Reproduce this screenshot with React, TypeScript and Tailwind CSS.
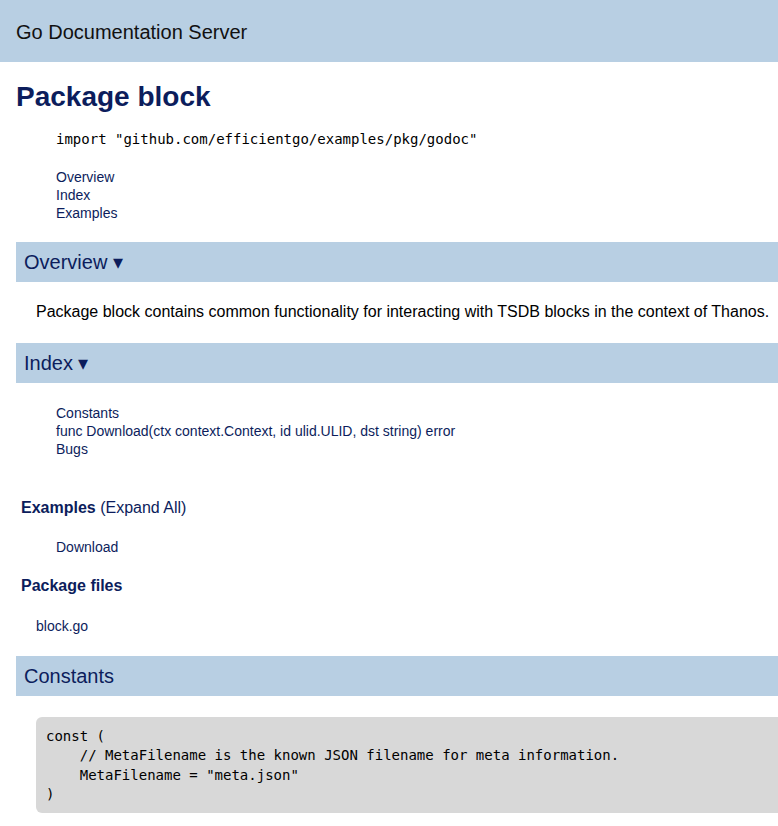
export default function App() {
  const sans = { fontFamily: '"Liberation Sans", Arial, sans-serif' };
  const mono = { fontFamily: '"DejaVu Sans Mono", monospace' };
  return (
    <div className="min-h-screen bg-white overflow-hidden" style={sans}>
      <header className="h-[62px] bg-[#b8cfe3] px-4 pt-[2px] flex items-center">
        <span className="text-[20px] text-[#111]">Go Documentation Server</span>
      </header>

      <main className="pl-4 text-[#0c1d5c]">
        <h1 className="mt-[19px] text-[28px] leading-[32px] font-bold">Package block</h1>
        <div className="mt-[17px] pl-10 text-[14px] leading-[18px] text-black" style={mono}>
          import "github.com/efficientgo/examples/pkg/godoc"
        </div>
        <div className="mt-5 pl-10 text-[14px] leading-[18px] flex flex-col">
          <a>Overview</a>
          <a>Index</a>
          <a>Examples</a>
        </div>

        <div className="mt-5 h-10 bg-[#b8cfe3] pl-2 flex items-center text-[20px]">Overview ▾</div>
        <p className="mt-5 pl-5 text-[16px] leading-5 text-black whitespace-nowrap">
          Package block contains common functionality for interacting with TSDB blocks in the context of Thanos.
        </p>

        <div className="mt-[21px] h-10 bg-[#b8cfe3] pl-2 flex items-center text-[20px]">Index ▾</div>
        <div className="mt-[21px] pl-10 text-[14px] leading-[18px] flex flex-col">
          <a>Constants</a>
          <a>func Download(ctx context.Context, id ulid.ULID, dst string) error</a>
          <a>Bugs</a>
        </div>

        <div className="mt-10 pl-[5px] text-[16px] leading-5">
          <span className="font-bold">Examples</span> (Expand All)
        </div>
        <div className="mt-5 pl-10 text-[14px] leading-[18px]">
          <a>Download</a>
        </div>
        <div className="mt-5 pl-[5px] text-[16px] leading-5 font-bold">Package files</div>
        <div className="mt-5 pl-5 text-[14px] leading-5">
          <a>block.go</a>
        </div>

        <div className="mt-5 h-10 bg-[#b8cfe3] pl-2 flex items-center text-[20px]">Constants</div>
        <pre
          className="mt-[21px] ml-5 -mr-4 bg-[#d8d8d8] rounded-l-md pl-[10px] pt-[10px] pb-[8px] text-[14px] leading-[19.4px] text-black"
          style={mono}
        >
{`const (
    // MetaFilename is the known JSON filename for meta information.
    MetaFilename = "meta.json"
)`}
        </pre>
      </main>
    </div>
  );
}
